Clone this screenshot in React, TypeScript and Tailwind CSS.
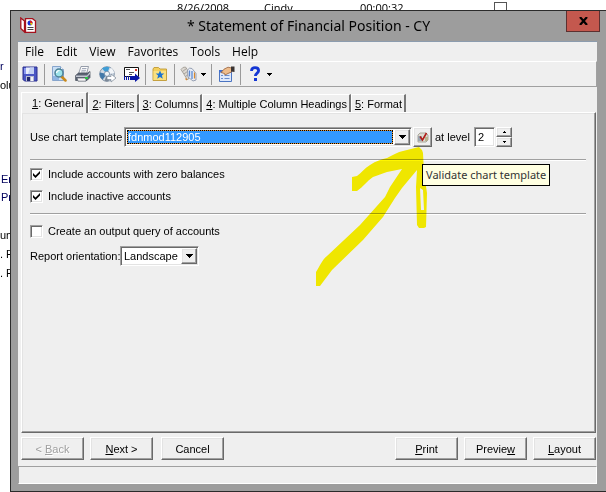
import { useState } from 'react';
import type { ReactNode } from 'react';

const MENUS = ['File', 'Edit', 'View', 'Favorites', 'Tools', 'Help'];

const TABS = ['General', 'Filters', 'Columns', 'Multiple Column Headings', 'Format'];

const RAISED =
  'border border-t-white border-l-white border-r-[#696969] border-b-[#696969] shadow-[inset_-1px_-1px_0_#a0a0a0,inset_1px_1px_0_#e3e3e3]';
const SUNKEN =
  'border border-t-[#a0a0a0] border-l-[#a0a0a0] border-r-white border-b-white shadow-[inset_1px_1px_0_#696969,inset_-1px_-1px_0_#e3e3e3]';

function SaveIcon() {
  return (
    <svg width="16" height="16" viewBox="0 0 16 16">
      <path d="M1 1h14v14H2.500L1 13.500z" fill="#4a56c4" stroke="#2a2f8f" />
      <path d="M2 2h2v6H2z" fill="#8b98ee" />
      <path d="M4 1.500h8v6.500H4z" fill="#e9eefc" />
      <path d="M8 1.500h4v6.500H6z" fill="#c3d0f3" />
      <path d="M4 10h8v5H4z" fill="#b9bdd0" />
      <path d="M5 11h3v4H5z" fill="#22276c" />
      <path d="M9 11h2v4H9z" fill="#f4f4f8" />
    </svg>
  );
}

function PreviewIcon() {
  return (
    <svg width="16" height="16" viewBox="0 0 16 16">
      <path d="M1.500 .5h8l3 3v11h-11z" fill="#c9dff5" stroke="#87a5cc" />
      <path d="M9.500 .5v3h3" fill="#fff" stroke="#87a5cc" />
      <path d="M2 10h6v4H2z" fill="#8fb5e2" />
      <path d="M10.500 10.500l4 4" stroke="#c98a1c" strokeWidth="2.500" strokeLinecap="round" />
      <circle cx="8" cy="7" r="4" fill="#9be3ea" stroke="#4e8296" strokeWidth="1.500" />
      <path d="M5.500 7a3 3 0 0 1 3-2.500" stroke="#fff" strokeWidth="1.200" fill="none" />
    </svg>
  );
}

function PrintIcon() {
  return (
    <svg width="16" height="16" viewBox="0 0 16 16">
      <path d="M6 .5h7.500L11.500 8H3.500z" fill="#fdfdfd" stroke="#7d8796" strokeWidth=".8" />
      <path d="M7 2.500h4.500M6.500 4.300H11M6 6h4.500" stroke="#8c94a8" strokeWidth=".8" />
      <path d="M.6 9.500L3.500 7h9l2.500-1.500v6L12 14.500H.6z" fill="#5b6372" stroke="#434a58" strokeWidth=".7" />
      <path d="M1 9.500h11L15 6v2l-3 3H1z" fill="#c3c8d2" />
      <path d="M2 12h9v3.200H3z" fill="#f4f4f4" stroke="#59606d" strokeWidth=".7" />
      <path d="M10 11h3v2h-3z" fill="#2bc445" />
    </svg>
  );
}

function DiscIcon() {
  return (
    <svg width="17" height="17" viewBox="0 0 17 17">
      <circle cx="8" cy="8" r="7.300" fill="#cfd9e4" stroke="#7b8ca2" strokeWidth=".9" />
      <path d="M8 8L3 2.600A7.300 7.300 0 0 1 10.500 1.200z" fill="#3f9ed6" />
      <path d="M8 8L12 1.800A7.300 7.300 0 0 1 15.200 7z" fill="#f3f6f9" />
      <path d="M8 8L1 6.500A7 7 0 0 0 3.500 13.800z" fill="#4379a9" />
      <path d="M8 8l-2.500 7A7 7 0 0 0 10 15z" fill="#7d8998" />
      <circle cx="8" cy="7.800" r="2.600" fill="#eef2f6" stroke="#6b85a3" strokeWidth=".8" />
      <path d="M8 10.500h4V8l5 4-5 4v-2.500H8z" fill="#fff" stroke="#7a8796" strokeWidth=".7" />
    </svg>
  );
}

function MailIcon() {
  return (
    <svg width="17" height="16" viewBox="0 0 17 16">
      <path d="M1.500 1.500h14v9h-14z" fill="#fff" stroke="#111" />
      <path d="M3 3.500h4M6 6.500h5M6 8.500h3" stroke="#555" />
      <path d="M12 3h2v2h-2z" fill="#d23b2b" />
      <path d="M1.500 10v4M3.500 10v4M5.500 10v4" stroke="#0a18a8" />
      <path d="M7 10h5V7.500l5 4.500-5 4v-2H7z" fill="#0a18a8" />
    </svg>
  );
}

function FavoritesIcon() {
  return (
    <svg width="16" height="16" viewBox="0 0 16 16">
      <path d="M1 3l1-1.500h4.500L8 3h6.500v11.500H1z" fill="#f3cf5c" stroke="#c09a34" strokeWidth=".9" />
      <path d="M1.500 5H14v9H1.500z" fill="#fae07f" />
      <path d="M8 4.500l1.300 3h3l-2.400 2 .9 3.200L8 11l-2.800 1.700.9-3.200-2.400-2h3z" fill="#1d74cf" />
    </svg>
  );
}

function AttachIcon() {
  return (
    <svg width="17" height="16" viewBox="0 0 17 16">
      <path d="M1 3.500Q2.500 .8 5.500 1l5.500 8-3.500 5z" fill="#dcd8d2" stroke="#9b968e" strokeWidth=".8" />
      <path d="M2.500 5.500l4-3M4 8l4-3M5.500 10.500l4-3" stroke="#98948e" strokeWidth=".8" />
      <path d="M7.500 4Q9.500 1 12 2.500l4 5v6.500l-3 1-5-4z" fill="#e8edf6" stroke="#8d97ab" strokeWidth=".9" />
      <path d="M9.500 4.500v6M12 5v8" fill="none" stroke="#5c8ad2" strokeWidth="1.300" />
      <path d="M5.500 12.500l1.500 1.500M14.500 6.500v6" stroke="#d9882b" strokeWidth="1.200" />
    </svg>
  );
}

function PropertiesIcon() {
  return (
    <svg width="17" height="16" viewBox="0 0 17 16">
      <path d="M1.500 4.500h12v11h-12z" fill="#dfe9fb" stroke="#4b74c2" />
      <path d="M1 4h12v2.500H1z" fill="#3e6ed0" />
      <path d="M3 9.500h2M3 12.500h2M6.500 9.500h5M6.500 12.500h5" stroke="#6b8fd0" />
      <path d="M3 6.500l3-3.300 4-2L13.500 2v4L10 7.500 7 9 6.500 7.500z" fill="#eebc8b" stroke="#97603a" strokeWidth=".8" />
      <path d="M13 .5h3.500V6L13 5.500z" fill="#3a3433" />
    </svg>
  );
}

function HelpIcon() {
  return (
    <svg width="16" height="16" viewBox="0 0 16 16">
      <path
        d="M4.500 5C4.500 2.500 6 1.700 8 1.700s3.600 1 3.600 3c0 2.300-3.200 2.500-3.200 5.300"
        fill="none"
        stroke="#1436d4"
        strokeWidth="2.800"
      />
      <path d="M7 12h3v3H7z" fill="#1436d4" />
    </svg>
  );
}

function ReportIcon() {
  return (
    <svg width="17" height="17" viewBox="0 0 17 17" aria-hidden="true">
      <path d="M.8 1l3.700 3v11L.8 11.500z" fill="#fff" stroke="#a5121d" strokeWidth="1.300" />
      <path d="M5.500 1.700h7L15.500 4v11.300h-10z" fill="#fff" stroke="#a5121d" strokeWidth="1.300" />
      <circle cx="10" cy="6" r="2.500" fill="#1c2fd0" />
      <path d="M10 6V3.500A2.500 2.500 0 0 1 12.500 6z" fill="#e02020" />
      <path d="M10 6h2.500A2.500 2.500 0 0 1 11 8.300z" fill="#f0d000" />
      <path d="M7.500 10.500h6M7.500 12.500h6" stroke="#444" />
    </svg>
  );
}

function ValidateIcon() {
  return (
    <svg width="12" height="12" viewBox="0 0 12 12" aria-hidden="true">
      <path d="M1 4l2-2h6l2 2v5l-2 2H1z" fill="#dedbd0" stroke="#a9a79c" />
      <path d="M1 5h4v5H1z" fill="#9aa6b0" />
      <path d="M8 6h3v3l-1 1H8z" fill="#b9b28e" />
      <path d="M3 5.500L5.500 9 9.500 2" fill="none" stroke="#b01c18" strokeWidth="1.600" />
    </svg>
  );
}

function Caret() {
  return (
    <svg width="7" height="4" viewBox="0 0 7 4" aria-hidden="true">
      <path d="M0 0h7v1H6v1H5v1H4v1H3V3H2V2H1V1H0z" fill="#000" />
    </svg>
  );
}

function ToolButton({ label, menu, children }: { label: string; menu?: boolean; children: ReactNode }) {
  return (
    <button aria-label={label} className={`flex h-6 items-center justify-center ${menu ? 'w-8 gap-1' : 'w-6'}`}>
      {children}
      {menu && (
        <svg width="5" height="3" viewBox="0 0 5 3">
          <path d="M0 0h5v1H4v1H3v1H2V2H1V1H0z" fill="#000" />
        </svg>
      )}
    </button>
  );
}

function Separator() {
  return <span className="mx-[2px] h-[21px] w-px bg-[#9a9a9a]" />;
}

function Divider() {
  return <hr className="mr-[9px] h-[2px] border-t border-b border-t-[#a0a0a0] border-b-white" />;
}

function Check({ label, checked }: { label: string; checked?: boolean }) {
  return (
    <label className="flex h-[22px] items-center gap-[5px]">
      <span className={`relative h-[13px] w-[13px] bg-white ${SUNKEN}`}>
        <input
          type="checkbox"
          defaultChecked={checked}
          className="peer absolute inset-0 h-full w-full appearance-none"
        />
        <svg
          className="pointer-events-none absolute top-[2px] left-[2px] hidden peer-checked:block"
          width="7"
          height="7"
          viewBox="0 0 7 7"
        >
          <path d="M0 2l2.500 2.500L7 0v2.500L2.500 7 0 4.500z" fill="#000" />
        </svg>
      </span>
      {label}
    </label>
  );
}

function DialogButton({ children, disabled }: { children: ReactNode; disabled?: boolean }) {
  return (
    <button
      disabled={disabled}
      className={`h-[23px] w-[63px] disabled:text-[#a0a0a0] disabled:[text-shadow:1px_1px_0_#fff] ${RAISED}`}
    >
      {children}
    </button>
  );
}

export default function App() {
  const [tab, setTab] = useState(0);

  return (
    <div className="relative flex min-h-screen flex-col overflow-hidden bg-white font-['Liberation_Sans',sans-serif] text-[11px] leading-4 text-black">
      {/* Rows of the window behind */}
      <div className="flex h-[10px] items-start overflow-hidden pl-[177px] font-['Open_Sans',sans-serif]">
        <span className="w-[87px]">8/26/2008</span>
        <span className="w-24">Cindy</span>
        <span className="w-[134px]">00:00:32</span>
        <span className="mt-[2px] h-[13px] w-[13px] border border-[#555]" />
      </div>

      <div className="flex flex-1">
        <div className="w-[10px] overflow-hidden pt-12 whitespace-nowrap">
          <p className="mb-[3px] text-[#00005c]">r</p>
          <p className="mb-[78px]">olu</p>
          <p className="mb-[2px] pl-px text-[#00005c]">En</p>
          <p className="mb-[22px] pl-px text-[#00005c]">Pr</p>
          <p className="mb-[3px]">um</p>
          <p className="mb-[3px]">. F</p>
          <p>. F</p>
        </div>

        <div className="flex flex-1 flex-col border-t border-b border-l border-[#2b2b2b] bg-[#9d9d9d] pr-[9px] pb-[7px] pl-[7px]">
          {/* Title bar */}
          <header className="flex h-[30px] items-start">
            <span className="w-[33px] pt-[6px] pl-[2px]">
              <ReportIcon />
            </span>
            <h1 className="flex-1 pt-1 text-center font-['Noto_Sans',sans-serif] text-[14px] leading-[22px]">
              * Statement of Financial Position - CY
            </h1>
            <button
              aria-label="Close"
              className="-mr-[3px] flex h-[21px] w-[34px] items-center justify-center border border-t-0 border-[#5c3030] bg-[#c4584e]"
            >
              <svg width="9" height="8" viewBox="0 0 9 8">
                <path d="M1 0l7 8M8 0L1 8" stroke="#000" strokeWidth="2.200" />
              </svg>
            </button>
          </header>

          <div className="flex flex-1 flex-col bg-[#efefef]">
            <nav className="flex h-5 items-center gap-3 border-t border-[#8c9cae] pl-[7px] font-['Open_Sans',sans-serif] text-[12px]">
              {MENUS.map(m => (
                <button key={m}>{m}</button>
              ))}
            </nav>

            {/* Toolbar */}
            <div className="flex h-[26px] items-center border-t border-r border-b border-t-white border-r-[#a0a0a0] border-b-[#a0a0a0]">
              <ToolButton label="Save"><SaveIcon /></ToolButton>
              <Separator />
              <ToolButton label="Preview"><PreviewIcon /></ToolButton>
              <ToolButton label="Print"><PrintIcon /></ToolButton>
              <ToolButton label="Export"><DiscIcon /></ToolButton>
              <ToolButton label="Send"><MailIcon /></ToolButton>
              <Separator />
              <ToolButton label="Add to favorites"><FavoritesIcon /></ToolButton>
              <Separator />
              <ToolButton label="Attachments" menu><AttachIcon /></ToolButton>
              <Separator />
              <ToolButton label="Properties"><PropertiesIcon /></ToolButton>
              <Separator />
              <ToolButton label="Help" menu><HelpIcon /></ToolButton>
            </div>

            {/* Tabs */}
            <div role="tablist" className="flex items-end pt-[5px] pl-[3px]">
              {TABS.map((t, i) => (
                <button
                  key={t}
                  role="tab"
                  aria-selected={tab === i}
                  onClick={() => setTab(i)}
                  className={`border-t border-r-2 border-l border-t-white border-r-[#777] border-l-white ${
                    tab === i ? 'relative -mb-px h-[21px] bg-[#efefef] pr-[3px] pl-[10px]' : 'h-[18px] pr-[2px] pl-[3px]'
                  }`}
                >
                  <u>{i + 1}</u>: {t}
                </button>
              ))}
            </div>

            <div
              role="tabpanel"
              className={`mr-px ml-[3px] flex flex-1 flex-col pt-[14px] pl-2 ${RAISED}`}
            >
              <div className="mb-3 flex h-5 items-center">
                <label htmlFor="template" className="w-[94px]">Use chart template</label>
                <span className={`relative mr-px flex h-5 flex-1 bg-white p-[2px] pr-[18px] ${SUNKEN}`}>
                  <span className="flex h-full w-full bg-[#e8912d]">
                    <select
                      id="template"
                      className="w-full appearance-none border border-dotted border-black bg-[#3399ff] bg-clip-padding leading-3 text-white outline-none"
                    >
                      <option>fdnmod112905</option>
                    </select>
                  </span>
                  <span
                    className={`pointer-events-none absolute top-px right-px flex h-4 w-4 items-center justify-center bg-[#efefef] ${RAISED}`}
                  >
                    <Caret />
                  </span>
                </span>
                <span className="relative mr-[3px]">
                  <button
                    aria-label="Validate chart template"
                    className={`flex h-5 w-[19px] items-center justify-center ${RAISED}`}
                  >
                    <ValidateIcon />
                  </button>
                  <span
                    role="tooltip"
                    className="absolute top-[37px] left-[9px] z-20 border border-black bg-[#ffffe1] px-[3px] py-px font-['Noto_Sans',sans-serif] text-[11px] leading-[18px] whitespace-nowrap text-[#333]"
                  >
                    Validate chart template
                  </span>
                </span>
                <label htmlFor="level" className="w-[39px]">at level</label>
                <input
                  id="level"
                  defaultValue="2"
                  className={`h-5 w-[21px] bg-white px-[3px] outline-none ${SUNKEN}`}
                />
                <span className="mr-[83px] ml-px flex flex-col">
                  <button aria-label="Raise level" className={`flex h-[10px] w-4 items-center justify-center ${RAISED}`}>
                    <svg width="3" height="2" viewBox="0 0 3 2"><path d="M1 0h1v1h1v1H0V1h1z" /></svg>
                  </button>
                  <button aria-label="Lower level" className={`flex h-[10px] w-4 items-center justify-center ${RAISED}`}>
                    <svg width="3" height="2" viewBox="0 0 3 2"><path d="M0 0h3v1H2v1H1V1H0z" /></svg>
                  </button>
                </span>
              </div>

              <Divider />
              <div className="pt-[2px] pb-[6px]">
                <Check label="Include accounts with zero balances" checked />
                <Check label="Include inactive accounts" checked />
              </div>
              <Divider />
              <div className="pt-[5px] pb-1">
                <Check label="Create an output query of accounts" />
              </div>

              <div className="flex h-5 items-center">
                <label htmlFor="orientation" className="w-[90px] whitespace-nowrap">Report orientation:</label>
                <span className={`relative h-5 w-[79px] bg-white ${SUNKEN}`}>
                  <select id="orientation" className="h-full w-full appearance-none pl-[3px] outline-none">
                    <option>Landscape</option>
                    <option>Portrait</option>
                  </select>
                  <span
                    className={`pointer-events-none absolute top-px right-px flex h-4 w-4 items-center justify-center bg-[#efefef] ${RAISED}`}
                  >
                    <Caret />
                  </span>
                </span>
              </div>
            </div>

            <footer className="flex h-[33px] items-start gap-[6px] pt-1 pr-px pl-[3px]">
              <DialogButton disabled>&lt; <u>B</u>ack</DialogButton>
              <DialogButton><u>N</u>ext &gt;</DialogButton>
              <span className="mr-auto ml-[2px]">
                <DialogButton>Cancel</DialogButton>
              </span>
              <DialogButton><u>P</u>rint</DialogButton>
              <DialogButton>Previe<u>w</u></DialogButton>
              <DialogButton><u>L</u>ayout</DialogButton>
            </footer>

            {/* Status bar */}
            <div className="h-[18px] border border-t-[#a0a0a0] border-r-white border-b-white border-l-[#a0a0a0]" />
          </div>
        </div>
      </div>

      {/* Highlighter arrow */}
      <svg
        className="pointer-events-none absolute top-0 left-0 z-10 mix-blend-multiply"
        width="606"
        height="492"
        viewBox="0 0 606 492"
        aria-hidden="true"
      >
        <path
          fillRule="evenodd"
          fill="#fff600"
          d="M352 177L357 176C361 173 365 168 370 165C376 161 382 159 387 158C393 155 398 152 403 151L415 148L419 147L422 150L423 153L424 173L427 193L426 227L424 228H419L417 225L416 187L417 170L402 188L395 198L383 217L363 240L332 270L320 286H316V272C320 266 322 260 327 256L360 225L385 197L390 187L402 169C397 170 392 171 387 172C382 174 378 175 373 177C367 181 363 187 357 191H352ZM420 188L421 210H424L423 190Z"
        />
      </svg>
    </div>
  );
}
